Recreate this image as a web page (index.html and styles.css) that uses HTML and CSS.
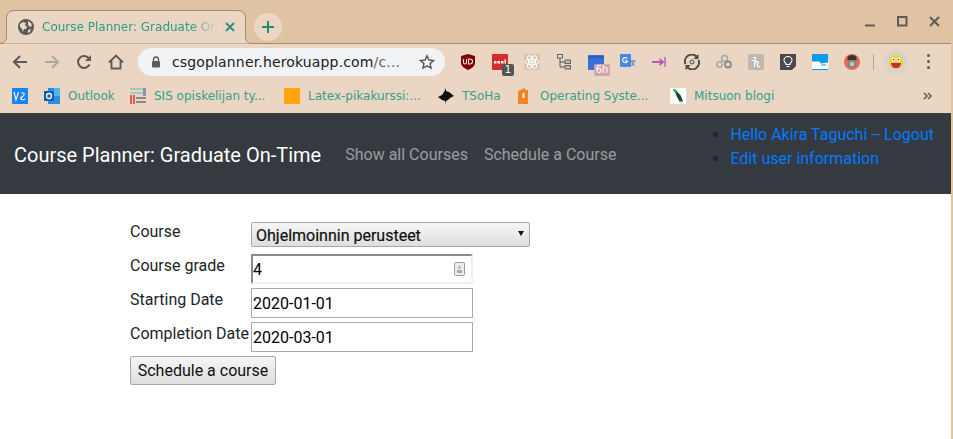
FILE: index.html
```html
<!doctype html>
<html lang="en">
<head>
	<meta charset="UTF-8" />
	<title>Course Planner: Graduate On-Time</title>
	<link rel="stylesheet" href="styles.css">
</head>
<body>
<div class="frame">
	<!-- tab strip -->
	<div class="tabstrip">
		<div class="tab">
			<svg class="tabshape" width="253" height="34" viewBox="0 0 253 34"><path d="M0 33.5C4 33.5 6.5 31 6.5 27V8.5Q6.5.5 14.500.5H237Q245.500.5 245.500 8.500V27C245.500 31 248 33.500 252.500 33.500" fill="#ead6c2" stroke="#a08a72"/></svg>
			<svg class="favicon" width="16" height="16" viewBox="0 0 16 16"><circle cx="8" cy="8" r="8" fill="#5c5a58"/><path d="M2 5l3-2 3 1-1 2 2 2-1 2-2 0-1 3-1-3-2-2zM10 2l3 2 1 3-2 1-2-2zM10 11l3-1-1 3-2 1z" fill="#ead6c2"/></svg>
			<span class="tabtitle">Course Planner: Graduate On-Time</span>
			<svg class="tabclose" width="10" height="10" viewBox="0 0 10 10"><path d="M1 1l8 8M9 1l-8 8" stroke="#2a8f7c" stroke-width="1.800"/></svg>
		</div>
		<div class="newtab">
			<svg width="14" height="14" viewBox="0 0 14 14"><path d="M7 1v12M1 7h12" stroke="#1f8f78" stroke-width="2"/></svg>
		</div>
		<div class="winctl">
			<svg width="32" height="20" viewBox="0 0 32 20"><path d="M11 14.500h10" stroke="#5c5c5c" stroke-width="2"/></svg>
			<svg width="32" height="20" viewBox="0 0 32 20"><rect x="12" y="6" width="8.500" height="8.500" fill="none" stroke="#5c5c5c" stroke-width="2"/></svg>
			<svg width="32" height="20" viewBox="0 0 32 20"><path d="M12 6l9 9M21 6l-9 9" stroke="#5c5c5c" stroke-width="2"/></svg>
		</div>
	</div>

	<!-- toolbar -->
	<div class="toolbar">
		<div class="navbtn"><svg width="16" height="16" viewBox="0 0 16 16"><path d="M15 8H2M8 2L2 8l6 6" fill="none" stroke="#5a5a5a" stroke-width="2"/></svg></div>
		<div class="navbtn"><svg width="16" height="16" viewBox="0 0 16 16"><path d="M1 8h13M8 2l6 6-6 6" fill="none" stroke="#b0a79d" stroke-width="2"/></svg></div>
		<div class="navbtn"><svg width="16" height="16" viewBox="0 0 16 16"><path d="M13.500 10.500A6 6 0 1 1 13 4.500" fill="none" stroke="#5a5a5a" stroke-width="2"/><path d="M15 1v6H9z" fill="#5a5a5a"/></svg></div>
		<div class="navbtn"><svg width="16" height="16" viewBox="0 0 16 16"><path d="M1 8.500L8 1.500l7 7M3.500 7v7.500h9V7" fill="none" stroke="#5a5a5a" stroke-width="1.800"/></svg></div>
		<div class="omnibox">
			<svg class="lock" width="10" height="12" viewBox="0 0 10 12"><path d="M2.500 5V3.500a2.500 2.500 0 0 1 5 0V5" fill="none" stroke="#5a5a5a" stroke-width="1.300"/><rect x="1" y="5" width="8" height="6.500" rx="1" fill="#5a5a5a"/></svg>
			<span class="url">csgoplanner.herokuapp.com<span class="urlpath">/c...</span></span>
			<svg class="star" width="16" height="16" viewBox="0 0 16 16"><path d="M8 1.800l1.900 4.200 4.600.5-3.400 3.100.9 4.500-4-2.300-4 2.300.9-4.500-3.400-3.100 4.600-.5z" fill="none" stroke="#5a5a5a" stroke-width="1.500"/></svg>
		</div>
		<div class="extensions">
			<div class="ext"><svg width="16" height="16" viewBox="0 0 16 16"><path d="M8 0l7 2v7c0 3-3 5-7 7-4-2-7-4-7-7V2z" fill="#800000"/><path d="M3.500 5v3.500a1.500 1.500 0 0 0 3 0V5M8.500 5v5h1.500a2.500 2.500 0 0 0 0-5z" fill="none" stroke="#f4e6e6" stroke-width="1.100"/></svg></div>
			<div class="ext"><svg width="16" height="16" viewBox="0 0 16 16"><rect width="16" height="16" rx="1" fill="#d42d2d"/><path d="M2 7h2.500v2.500H2zM5.500 7H8v2.500H5.500zM9 7h2.500v2.500H9zM12.500 5.500H14v4h-1.500z" fill="#fff"/></svg><span class="badge badge-dark">1</span></div>
			<div class="ext"><svg width="16" height="16" viewBox="0 0 16 16"><rect width="16" height="16" fill="#d9c5b0"/><g fill="none" stroke="#fff" stroke-width="1"><ellipse cx="8" cy="8" rx="7" ry="2.800"/><ellipse cx="8" cy="8" rx="7" ry="2.800" transform="rotate(60 8 8)"/><ellipse cx="8" cy="8" rx="7" ry="2.800" transform="rotate(120 8 8)"/></g><circle cx="8" cy="8" r="1.600" fill="#fff"/></svg></div>
			<div class="ext"><svg width="16" height="16" viewBox="0 0 16 16"><path d="M4 3v10h5M4 8h5" fill="none" stroke="#555" stroke-width="1"/><rect x="1.500" y="0.500" width="5" height="3.500" fill="#ddd" stroke="#666"/><rect x="9" y="6" width="5.500" height="3.500" fill="#bbb" stroke="#666"/><rect x="9" y="11.500" width="5.500" height="3.500" fill="#bbb" stroke="#666"/></svg></div>
			<div class="ext"><svg width="16" height="16" viewBox="0 0 16 16"><path d="M1 1h14a1 1 0 0 1 1 1v13a1 1 0 0 1-1 1H1a1 1 0 0 1-1-1V2a1 1 0 0 1 1-1z" fill="#3b6fd8"/><path d="M0 2h16v2H0z" fill="#2f5cc0"/></svg><span class="badge badge-pink">6h</span></div>
			<div class="ext"><svg width="18" height="16" viewBox="0 0 18 16"><path d="M8 3h9v12h-7z" fill="#d8d8d8"/><rect x="1" width="11" height="13" rx="1" fill="#4a86e8"/><path d="M8 4.500a2.500 2.500 0 1 0 .5 2.500H5.800" fill="none" stroke="#fff" stroke-width="1.100"/><path d="M11.500 7h5M14 6v1M12.500 12l3-5M12.500 8l3 4" stroke="#666" stroke-width=".8" fill="none"/></svg></div>
			<div class="ext"><svg width="16" height="16" viewBox="0 0 16 16"><path d="M0 8h10M7.500 5L11 8l-3.500 3" fill="none" stroke="#b25fae" stroke-width="1.800"/><path d="M13 3v10" stroke="#b25fae" stroke-width="1.400"/></svg></div>
			<div class="ext"><svg width="16" height="16" viewBox="0 0 16 16"><path d="M1.500 10A6.800 6.800 0 0 1 12.500 2.500M14.500 6A6.800 6.800 0 0 1 3.500 13.500" fill="none" stroke="#4a4a4a" stroke-width="2"/><path d="M14.500 0v5h-5zM1.500 16v-5h5z" fill="#4a4a4a"/><circle cx="8" cy="8" r="2" fill="none" stroke="#4a4a4a"/></svg></div>
			<div class="ext"><svg width="16" height="16" viewBox="0 0 16 16"><g fill="none" stroke="#a8a8a8" stroke-width="1.500"><circle cx="3.500" cy="10.500" r="2.700"/><circle cx="8.500" cy="4.500" r="3"/></g><circle cx="12" cy="10.500" r="3" fill="none" stroke="#8a8a8a" stroke-width="1.800"/></svg></div>
			<div class="ext"><svg width="16" height="16" viewBox="0 0 16 16"><rect width="16" height="16" rx="2" fill="#bdbab6"/><path d="M5 3.500h2.500L6.500 13M3.500 6.500h4M6.500 9c2-2 4-1.500 3.500 0l-.500 1.500c0 2 1 3 2.500 2" fill="none" stroke="#fff" stroke-width="1.200"/></svg></div>
			<div class="ext"><svg width="16" height="16" viewBox="0 0 16 16"><path d="M0 0h16v12l-4 4H0z" fill="#4a4a4a"/><path d="M6 10.500V9.500C4.500 8.500 4 7.500 4 6.500a4 4 0 0 1 8 0c0 1-.5 2-2 3v1zM6.500 12.500h3" fill="none" stroke="#fff" stroke-width="1.100"/></svg></div>
			<div class="ext"><svg width="16" height="16" viewBox="0 0 16 16"><rect width="16" height="16" fill="#0d9bea"/><path d="M0 7.500h7l2 2 7-1V15H0z" fill="#fff"/><path d="M9 11h5" stroke="#0d9bea"/></svg></div>
			<div class="ext"><svg width="16" height="16" viewBox="0 0 16 16"><circle cx="8" cy="8" r="8" fill="#ee6a55"/><rect x="3.500" y="2" width="9" height="12" rx="2" fill="#8a8480"/><path d="M3.500 4c0-2 2-3 4.500-3s4.500 1 4.500 3v2h-9z" fill="#3a3433"/><circle cx="8" cy="10" r="2.200" fill="#c8c0ba"/></svg></div>
			<div class="sep"></div>
			<div class="avatar"><svg width="16" height="16" viewBox="0 0 16 16"><circle cx="8" cy="8" r="7.500" fill="#f3cf3c"/><circle cx="5.500" cy="5.500" r="2" fill="#fff"/><circle cx="10.500" cy="5.500" r="2" fill="#fff"/><circle cx="5.500" cy="5.500" r=".8" fill="#333"/><circle cx="10.500" cy="5.500" r=".8" fill="#333"/><path d="M3 9h10c0 3-2 5-5 5s-5-2-5-5z" fill="#c0304a"/></svg></div>
			<div class="menu"><i></i><i></i><i></i></div>
		</div>
	</div>

	<!-- bookmarks -->
	<div class="bookmarks">
		<div class="bm"><svg width="16" height="16" viewBox="0 0 16 16"><rect width="16" height="16" fill="#1a84f5"/><path d="M2 4l2 8 2.500-8M8.500 11l3.500-4c1-2-1.500-3-2.500-1.500M9.500 8.500c-2 3 1 4 3.500 2.500" fill="none" stroke="#fff" stroke-width="1.100"/></svg></div>
		<div class="bm"><svg width="16" height="16" viewBox="0 0 16 16"><rect x="4" width="12" height="16" fill="#2b8fdc"/><rect x="10" width="6" height="8" fill="#52b3ea"/><rect y="3" width="10" height="10" fill="#0f5fae"/><circle cx="5" cy="8" r="2.500" fill="none" stroke="#fff" stroke-width="1.300"/></svg><span class="bmtext-short">Outlook</span></div>
		<div class="bm"><svg width="16" height="16" viewBox="0 0 16 16"><rect width="13" height="2" fill="#9fc9c1"/><rect y="4" width="13" height="2" fill="#9fc9c1"/><rect y="7" width="2" height="9" fill="#e05a5a"/><rect x="3" y="7" width="2" height="9" fill="#e05a5a"/><rect x="6" y="9" width="10" height="2" fill="#888"/><rect x="6" y="13" width="10" height="2" fill="#888"/><rect x="13" width="3" height="8" fill="#a08ab0"/></svg><span class="bmtext">SIS opiskelijan ty...</span></div>
		<div class="bm"><svg width="16" height="16" viewBox="0 0 16 16"><rect width="16" height="16" fill="#ffa30f"/></svg><span class="bmtext">Latex-pikakurssi:...</span></div>
		<div class="bm"><svg width="16" height="16" viewBox="0 0 16 16"><path d="M8 0v3l3 1 5 4-4 2-2 2-2 1v3l-1-3-3-1-4-3 4-2 2-3z" fill="#111"/></svg><span class="bmtext-tsoha">TSoHa</span></div>
		<div class="bm"><svg width="16" height="16" viewBox="0 0 16 16"><path d="M2 3l7-3v2h3v14H2z" fill="#f58220"/><rect x="6.500" y="5" width="2" height="5" fill="#fff"/></svg><span class="bmtext">Operating Syste...</span></div>
		<div class="bm"><svg width="16" height="16" viewBox="0 0 16 16"><rect width="16" height="16" fill="#fff"/><path d="M3 1l3 1 5 6 2 6-3-1 1 3-4-7-2-5z" fill="#0b4d2e"/><path d="M3 1l3 1 1 3-3-1z" fill="#19c04d"/></svg><span>Mitsuon blogi</span></div>
		<div class="bm-more">
			<svg width="9" height="8" viewBox="0 0 9 8"><path d="M1 1l3 3-3 3M5 1l3 3-3 3" fill="none" stroke="#5a5a5a" stroke-width="1.500"/></svg>
		</div>
	</div>

	<!-- the page itself -->
	<div class="page">
		<nav class="navbar">
			<a class="brand">Course Planner: Graduate On-Time</a>
			<a class="navlink">Show all Courses</a>
			<a class="navlink">Schedule a Course</a>
			<ul class="userlinks">
				<li><a>Hello Akira Taguchi -- Logout</a></li>
				<li><a>Edit user information</a></li>
			</ul>
		</nav>
		<form class="courseform">
			<div class="row">
				<label>Course</label>
				<span class="selectwrap">
					<select class="courseselect"><option>Ohjelmoinnin perusteet</option></select>
				</span>
			</div>
			<div class="row">
				<label>Course grade</label>
				<span class="numberwrap">
					<input class="gradeinput" type="text" value="4">
					<svg class="spin" width="11" height="14" viewBox="0 0 11 14"><rect x=".5" y=".5" width="10" height="13" rx="1" fill="#ececec" stroke="#9a9a9a"/><path d="M5.500 3l1.500 3.500h-3zM3 8h5v3H3z" fill="#a8a8a8"/></svg>
				</span>
			</div>
			<div class="row">
				<label>Starting Date</label>
				<input class="dateinput" type="text" value="2020-01-01">
			</div>
			<div class="row">
				<label>Completion Date</label>
				<input class="dateinput" type="text" value="2020-03-01">
			</div>
			<button class="submitbtn" type="button">Schedule a course</button>
		</form>
	</div>
</div>
</body>
</html>
```

FILE: styles.css
```css
html,body{margin: 0;padding: 0;}
body{width: 953px;height: 439px;overflow: hidden;background: #dfc3a2;font-family: "DejaVu Sans",sans-serif;}
ul,li{margin: 0;padding: 0;}

.frame{width: 951px;height: 439px;display: flex;flex-direction: column;}

/* tab strip */
.tabstrip{height: 43px;flex: none;display: flex;align-items: flex-start;border-bottom: 1px solid #a08a72;box-sizing: content-box;}
.tab{position: relative;width: 253px;height: 34px;margin-top: 10px;flex: none;display: flex;align-items: center;font-size: 12px;color: #2a9d86;}
.tabshape{position: absolute;left: 0;top: 0;}
.favicon{position: relative;margin: 0 8px 0 18px;flex: none;}
.tabtitle{position: relative;width: 175px;white-space: nowrap;overflow: hidden;-webkit-mask-image: linear-gradient(to right,#000 85%,transparent);mask-image: linear-gradient(to right,#000 85%,transparent);}
.tabclose{position: relative;margin-left: 8px;flex: none;}
.newtab{width: 28px;height: 28px;margin: 13px 0 0 1px;border-radius: 50%;background: #ead6c2;display: flex;align-items: center;justify-content: center;}
.winctl{margin-left: auto;margin-top: 11px;display: flex;margin-right: 1px;}

/* toolbar */
.toolbar{height: 35px;flex: none;background: #ead6c2;display: flex;align-items: center;padding-left: 4px;box-sizing: border-box;}
.navbtn{width: 32px;height: 32px;display: flex;align-items: center;justify-content: center;}
.omnibox{width: 307px;height: 28px;margin-left: 6px;background: #f1f3f4;border-radius: 14px;display: flex;align-items: center;}
.lock{margin-left: 13px;flex: none;}
.url{margin-left: 11px;font-size: 14px;letter-spacing: .15px;color: #202124;white-space: nowrap;}
.urlpath{color: #5f6368;}
.star{margin-left: auto;margin-right: 10px;}
.extensions{margin-left: 7px;display: flex;align-items: center;}
.ext{position: relative;width: 32px;height: 28px;display: flex;align-items: center;justify-content: center;}
.badge{position: absolute;top: 16px;height: 12px;border-radius: 2px;color: #fff;font-size: 10px;line-height: 12px;text-align: center;}
.badge-dark{left: 18px;width: 12px;background: #555;}
.badge-pink{left: 14px;width: 16px;background: #cfa5ad;}
.sep{width: 1px;height: 16px;background: #b5a595;margin: 0 10px 0 5px;}
.avatar{width: 24px;height: 24px;border-radius: 50%;background: #d8d4d0;display: flex;align-items: center;justify-content: center;}
.menu{width: 3px;margin-left: 19px;display: flex;flex-direction: column;gap: 3px;}
.menu i{width: 3px;height: 3px;border-radius: 50%;background: #5a5a5a;}

/* bookmarks */
.bookmarks{height: 35px;flex: none;background: #ead6c2;display: flex;align-items: center;padding-left: 4px;position: relative;border-bottom: 1px solid #3e3e3e;box-sizing: border-box;font-size: 12px;color: #35a08c;}
.bm{display: flex;align-items: center;gap: 8px;padding: 0 8px;white-space: nowrap;}
.bmtext{width: 114px;}
.bmtext-short{width: 46px;}
.bmtext-tsoha{width: 38px;}
.bm-more{margin-left: auto;margin-right: 19px;display: flex;}

/* page */
.page{flex: 1;background: #fff;font-family: Roboto,sans-serif;font-size: 16px;line-height: 24px;color: #212529;}
.navbar{height: 80px;box-sizing: border-box;background: #343a40;padding: 9px 17px 7px 14px;display: flex;align-items: center;}
.brand{font-size: 20px;line-height: 30px;color: #fff;margin-right: 16px;white-space: nowrap;}
.navlink{color: rgba(255,255,255,.5);padding: 0 8px;white-space: nowrap;}
.userlinks{margin: 0 0 16px auto;padding-left: 40px;}
.userlinks a{color: #007bff;}

.courseform{margin: 26px 0 0 130px;}
.row{display: flex;height: 34px;align-items: flex-start;}
.row label{width: 121px;flex: none;white-space: nowrap;}
.selectwrap{position: relative;display: block;margin-top: 2px;}
.courseselect{display: block;width: 279px;height: 25px;padding: 2px 4px 0;-webkit-appearance: none;appearance: none;border: 1px solid #a9a9a9;border-radius: 2px;background: linear-gradient(#f6f6f6,#dedede);font-family: Roboto,sans-serif;font-size: 16px;color: #111;-webkit-text-stroke: .2px #111;}
.selectwrap:after{content: "";position: absolute;right: 6px;top: 9px;border: 3.5px solid transparent;border-top: 5px solid #111;border-bottom: 0;}
.numberwrap{position: relative;display: block;}
.gradeinput,.dateinput{display: block;width: 222px;height: 30px;box-sizing: border-box;padding: 1px;font-family: Roboto,sans-serif;font-size: 16px;color: #000;background: #fff;outline: 0;}
.dateinput{border: 1px solid #a9a9a9;}
.gradeinput{border: 2px solid;border-color: #8a8a8a #f0f0f0 #f0f0f0 #8a8a8a;padding: 0;}
.spin{position: absolute;right: 8px;top: 8px;}
.submitbtn{display: block;height: 29px;width: 146px;padding: 0;border: 1px solid #a9a9a9;border-radius: 2px;background: linear-gradient(#f6f6f6,#dedede);font-family: Roboto,sans-serif;font-size: 16px;color: #111;}
```
